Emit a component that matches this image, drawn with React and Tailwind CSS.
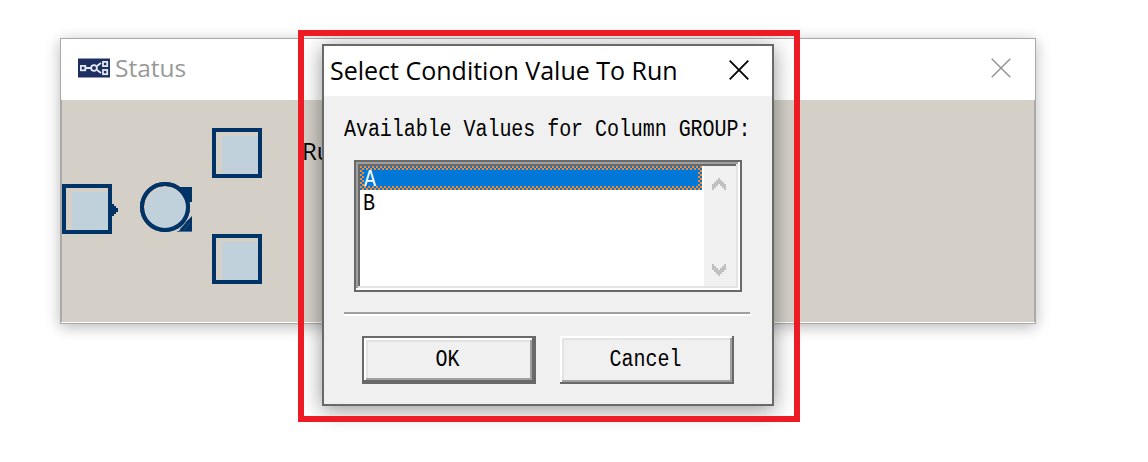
import React from "react";

const MONO =
  "font-['Liberation_Mono',monospace] text-[20px] leading-6 whitespace-pre text-black inline-block scale-y-[1.15]";

function Close({ className }) {
  return (
    <svg className={className} viewBox="0 0 20 20" fill="none" stroke="currentColor">
      <path d="M0.7 0.7L19.3 19.3M19.3 0.7L0.7 19.3" />
    </svg>
  );
}

function NodeBox({ className }) {
  return (
    <div className={"h-[50px] w-[50px] border-4 border-[#003366] pt-1 pl-1.5 " + className}>
      <div className="h-full w-full bg-[#c1d1dc]" />
    </div>
  );
}

function AppIcon() {
  return (
    <svg className="h-5 w-8" viewBox="0 0 32 20">
      <rect width="32" height="20" fill="#1c2f60" />
      <path d="M0 .5H32M0 19.5H32" stroke="#8e98b0" />
      <g fill="none" stroke="#e4e8f2" strokeWidth="1.8">
        <rect x="2.9" y="7.9" width="4.4" height="4.4" />
        <path d="M8 10h5M19 8l4-3M19 12l4 3" />
        <circle cx="16" cy="10" r="2.900" />
        <rect x="25" y="3.900" width="4.200" height="4.200" />
        <rect x="25" y="12" width="4.200" height="4.200" />
      </g>
    </svg>
  );
}

function StatusWindow() {
  return (
    <div className="flex h-[286px] w-[976px] flex-col border border-[#a9a9a9] bg-white shadow-[0_3px_14px_rgba(0,0,0,0.28)]">
      <div className="flex h-[61px] shrink-0 items-center pr-6 pb-1 pl-[17px] text-[#999999]">
        <AppIcon />
        <span className="ml-[5px] grow pt-px font-['Open_Sans',sans-serif] text-[24.5px] leading-8">Status</span>
        <Close className="h-5 w-5 stroke-[1.6]" />
      </div>
      <div className="relative mb-px grow border-x border-[#a9a9a9] bg-[#d4d0c8]">
        <NodeBox className="absolute top-[84px] left-0" />
        <svg className="absolute top-[104px] left-[50px] h-3 w-1.5" viewBox="0 0 6 12" fill="#003366">
          <path d="M0 0h2v2h2v2h2v4H4v2H2v2H0z" />
        </svg>
        <svg className="absolute top-[82px] left-[78px] h-[50px] w-[52px]" viewBox="0 0 52 50">
          <path d="M39 5H52V20H48L47 14z" fill="#003366" />
          <path d="M52 34V50H38L48 38z" fill="#003366" />
          <path d="M40 47L48 38M44 48L50 41" stroke="#33598a" strokeWidth="0.8" />
          <path d="M37 49.500H52" stroke="#4f7299" />
          <circle cx="25" cy="25" r="23" fill="#d4d0c8" stroke="#003366" strokeWidth="4" />
          <circle cx="26" cy="26.500" r="20.500" fill="#c1d1dc" />
          <circle cx="25" cy="25" r="23" fill="none" stroke="#003366" strokeWidth="4" />
        </svg>
        <NodeBox className="absolute top-7 left-[150px]" />
        <NodeBox className="absolute top-[134px] left-[150px]" />
        <span className="absolute top-[35px] left-[240px] font-['Open_Sans',sans-serif] text-[24px] leading-8 text-black">
          Ru
        </span>
      </div>
    </div>
  );
}

function ListBox() {
  return (
    <div className="mt-[18px] ml-[30px] h-[132px] w-[388px] border-2 border-[#696969]">
      <div className="h-full bg-white p-1 shadow-[inset_-2px_-2px_#ffffff,inset_2px_2px_#a0a0a0,inset_-4px_-4px_#e3e3e3,inset_4px_4px_#696969]">
        <div className="flex h-full">
          <div className="grow pr-0.5">
            <div className="h-6 bg-[repeating-conic-gradient(#0078d7_0_25%,#ff8728_0_50%)] bg-[length:4px_4px] p-1">
              <div className="flex h-4 items-center bg-[#0078d7]">
                <span className={MONO + " pt-1 text-white!"}>A</span>
              </div>
            </div>
            <div className="flex h-6 items-center pl-[3px]">
              <span className={MONO + " pt-1"}>B</span>
            </div>
          </div>
          <div className="flex w-8 flex-col items-center justify-between bg-[#f0f0f0] pt-3 pr-0.5 pb-2.5">
            <svg className="h-3 w-3.5" viewBox="0 0 14 12" fill="#c0c0c0">
              <path d="M6 0h2v2h2v2h2v2h2v6h-2v-2h-2v-2H8V6H6v2H4v2H2v2H0V6h2V4h2V2h2z" />
            </svg>
            <svg className="h-3 w-3.5" viewBox="0 0 14 12" fill="#c0c0c0">
              <path d="M6 12h2v-2h2V8h2V6h2V0h-2v2h-2v2H8v2H6V4H4V2H2V0H0v6h2v2h2v2h2z" />
            </svg>
          </div>
        </div>
      </div>
    </div>
  );
}

function Bevel({ children }) {
  return (
    <span className="flex h-full items-center justify-center bg-[#f0f0f0] pr-[3px] shadow-[inset_-2px_-2px_#696969,inset_2px_2px_#ffffff,inset_-4px_-4px_#a0a0a0,inset_4px_4px_#e3e3e3]">
      <span className={MONO}>{children}</span>
    </span>
  );
}

function Dialog() {
  return (
    <div className="h-[362px] w-[452px] border-2 border-[#696969] bg-[#f0f0f0] shadow-[0_4px_20px_rgba(0,0,0,0.42)]">
      <div className="flex h-[50px] items-center justify-between bg-white pr-[23px] pb-[3px] pl-[6px] text-black">
        <span className="pt-px font-['Open_Sans',sans-serif] text-[25px] leading-8 whitespace-nowrap">
          Select Condition Value To Run
        </span>
        <Close className="h-5 w-5 stroke-[1.8]" />
      </div>
      <div className="flex h-[46px] items-end pl-5">
        <span className={MONO + " tracking-[-0.05px]"}>Available Values for Column GROUP:</span>
      </div>
      <ListBox />
      <div className="mt-5 ml-5 h-1 w-[408px] border-b-2 border-b-white">
        <div className="h-0.5 w-[406px] bg-[#a0a0a0]" />
      </div>
      <div className="mt-5 ml-[38px] flex gap-6">
        <button className="h-12 w-[174px] border-2 border-[#696969]">
          <Bevel>OK</Bevel>
        </button>
        <button className="h-12 w-[174px]">
          <Bevel>Cancel</Bevel>
        </button>
      </div>
    </div>
  );
}

export default function App() {
  return (
    <div className="relative h-[462px] w-[1148px] overflow-hidden bg-white pt-[38px] pl-[60px]">
      <StatusWindow />
      <div className="absolute top-[44px] left-[322px]">
        <Dialog />
      </div>
      <div className="absolute top-[30px] left-[298px] h-[392px] w-[502px] border-6 border-[#ed1c24]" />
    </div>
  );
}
